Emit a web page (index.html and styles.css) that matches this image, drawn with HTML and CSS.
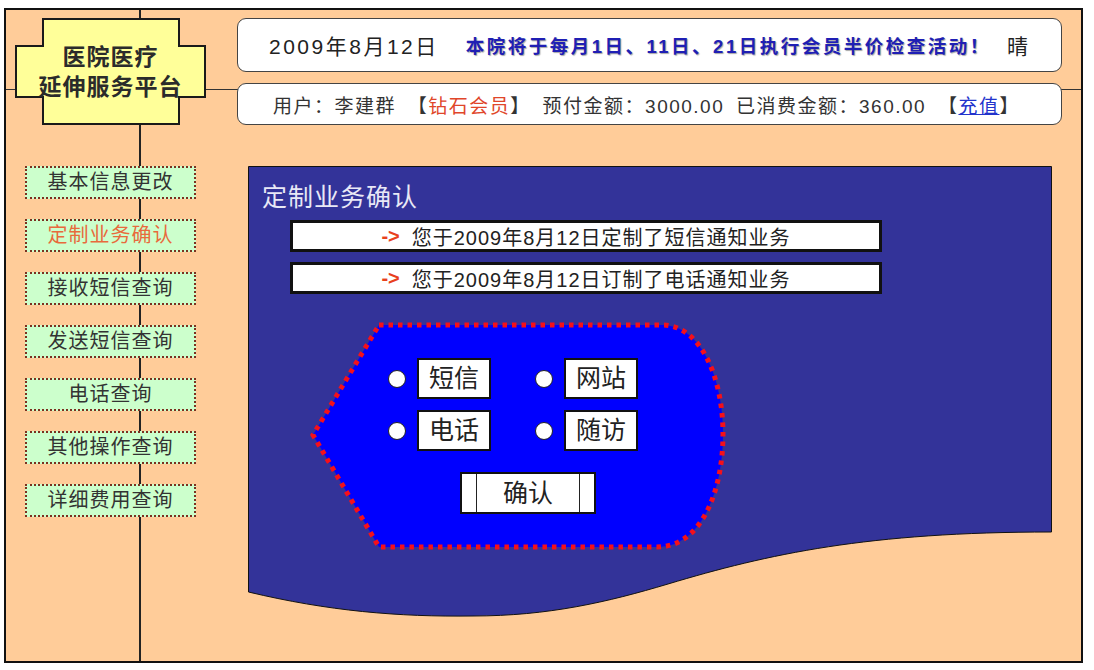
FILE: index.html
```html
<!DOCTYPE html>
<html lang="zh-CN">
<head>
  <meta charset="UTF-8" />
  <title>医院医疗延伸服务平台 - 定制业务确认</title>
  <link rel="stylesheet" href="styles.css">
</head>
<body>
  <div class="frame">
    <header class="top">
      <div class="logo">
        <svg class="logo-shape" width="191" height="107" viewBox="0 0 191 107">
          <path d="M28,1 H164 V28 H190 V79 H164 V106 H28 V79 H1 V28 H28 Z" fill="#ffff99" stroke="#1a1a1a" stroke-width="2"/>
        </svg>
        <div class="logo-text">医院医疗<br>延伸服务平台</div>
      </div>

      <div class="info">
        <div class="info-box news">
          <span class="date">2009年8月12日</span>
          <span class="news-text">本院将于每月1日、11日、21日执行会员半价检查活动！</span>
          <span class="weather">晴</span>
        </div>
        <div class="info-box user">
          <span>用户：李建群 【<span class="level">钻石会员</span>】 预付金额：3000.00 已消费金额：360.00 【<a href="#">充值</a>】</span>
        </div>
      </div>
    </header>

    <div class="main">
      <nav class="menu">
        <a href="#">基本信息更改</a>
        <a href="#" class="active">定制业务确认</a>
        <a href="#">接收短信查询</a>
        <a href="#">发送短信查询</a>
        <a href="#">电话查询</a>
        <a href="#">其他操作查询</a>
        <a href="#">详细费用查询</a>
      </nav>

      <section class="panel">
        <svg class="panel-shape" width="804" height="452" viewBox="0 0 804 452">
          <path d="M0.5,0.5 H803.5 V366 C620,366 520,388 420,418 C360,436 300,450 225,450 C150,451 80,445 0.5,426 Z" fill="#333399" stroke="#111" stroke-width="1"/>
        </svg>
        <div class="panel-body">
          <h2>定制业务确认</h2>
          <div class="notice"><span class="arrow">-&gt;</span>您于2009年8月12日定制了短信通知业务</div>
          <div class="notice"><span class="arrow">-&gt;</span>您于2009年8月12日订制了电话通知业务</div>

          <div class="chooser">
            <svg class="chooser-shape" width="418" height="228" viewBox="0 0 418 228">
              <path d="M69,3 H352 C392,3 413,58 413,112 C413,168 392,225 347,225 H69 L3,113 Z" fill="#0000ff" stroke="#f5101a" stroke-width="5" stroke-dasharray="4.5 5"/>
            </svg>
            <div class="chooser-body">
              <div class="options">
                <label class="option"><span class="radio"></span><span class="option-label">短信</span></label>
                <label class="option"><span class="radio"></span><span class="option-label">网站</span></label>
                <label class="option"><span class="radio"></span><span class="option-label">电话</span></label>
                <label class="option"><span class="radio"></span><span class="option-label">随访</span></label>
              </div>
              <button class="confirm"><span>确认</span></button>
            </div>
          </div>
        </div>
      </section>
    </div>
  </div>
</body>
</html>
```

FILE: styles.css
```css
body {
  margin: 0;
  background: #fff;
  font-family: "Liberation Sans", "Noto Sans CJK SC", sans-serif;
  color: #222;
}
.frame {
  margin: 8px 0 0 4px;
  width: 1075px;
  height: 651px;
  border: 2px solid #111;
  background:
    linear-gradient(#222, #222) 133px 0 / 2px 100% no-repeat,
    linear-gradient(#333, #333) 0 79px / 100% 1px no-repeat,
    #ffcc99;
}
.top {
  display: flex;
  padding: 8px 0 0 9px;
}
.logo {
  display: grid;
  width: 191px;
  height: 107px;
}
.logo > * {
  grid-area: 1 / 1;
}
.logo-text {
  align-self: center;
  text-align: center;
  font-size: 23px;
  font-weight: bold;
  line-height: 30px;
  color: #2b2b2b;
  letter-spacing: 1px;
}
.info {
  margin-left: 31px;
  width: 825px;
  display: flex;
  flex-direction: column;
  gap: 11px;
}
.info-box {
  display: flex;
  align-items: center;
  box-sizing: border-box;
  background: #fff;
  border: 1.5px solid #444;
  border-radius: 9px;
}
.news {
  height: 54px;
  padding: 0 33px 0 31px;
  font-size: 21px;
}
.date {
  letter-spacing: 2.5px;
}
.news-text {
  margin-left: 27px;
  color: #1f1fb4;
  font-weight: bold;
  font-size: 18.5px;
  letter-spacing: 2.5px;
  text-shadow: 1px 1px 1px rgba(0,0,0,0.35);
}
.weather {
  margin-left: auto;
}
.user {
  height: 42px;
  padding-left: 35px;
  font-size: 19px;
  color: #333;
  letter-spacing: 1.5px;
  word-spacing: 5px;
}
.level {
  color: #e0462a;
}
.user a {
  color: #2233cc;
}
.main {
  display: flex;
  align-items: flex-start;
  gap: 52px;
  margin-top: 41px;
  padding-left: 19px;
}
.menu {
  width: 171px;
  display: flex;
  flex-direction: column;
  gap: 20px;
}
.menu a {
  display: block;
  height: 33px;
  box-sizing: border-box;
  border: 2px dotted #7b3020;
  background: #ccffcc;
  text-align: center;
  line-height: 29px;
  font-size: 20px;
  color: #333;
  text-decoration: none;
  letter-spacing: 1px;
}
.menu a.active {
  color: #e86a3c;
}
.panel {
  display: grid;
  width: 804px;
  height: 452px;
}
.panel > * {
  grid-area: 1 / 1;
}
.panel-body {
  padding: 16px 0 0 14px;
}
.panel h2 {
  margin: 0;
  font-size: 25px;
  font-weight: normal;
  line-height: 30px;
  color: #e8e8f6;
  letter-spacing: 1px;
}
.notice {
  display: flex;
  align-items: center;
  justify-content: center;
  margin: 8px 0 0 28px;
  width: 592px;
  height: 32px;
  box-sizing: border-box;
  border: 3px solid #111;
  background: #fff;
  font-size: 20px;
  letter-spacing: 1px;
  color: #222;
}
.notice + .notice {
  margin-top: 10px;
}
.arrow {
  color: #e8401c;
  font-weight: bold;
  margin-right: 12px;
  letter-spacing: 0;
}
.chooser {
  display: grid;
  width: 418px;
  height: 228px;
  margin: 28px 0 0 48px;
}
.chooser > * {
  grid-area: 1 / 1;
}
.chooser-body {
  padding: 36px 0 0 78px;
}
.options {
  display: grid;
  grid-template-columns: repeat(2, max-content);
  column-gap: 44px;
  row-gap: 11px;
}
.option {
  display: flex;
  align-items: center;
  gap: 11px;
}
.radio {
  width: 18px;
  height: 18px;
  box-sizing: border-box;
  border-radius: 50%;
  border: 1.5px solid #222;
  background: #fff;
}
.option-label {
  width: 74px;
  height: 41px;
  box-sizing: border-box;
  border: 2px solid #111;
  background: #fff;
  font-size: 25px;
  line-height: 37px;
  text-align: center;
  color: #222;
}
.confirm {
  display: flex;
  margin: 21px 0 0 72px;
  width: 136px;
  height: 42px;
  padding: 0 14px;
  box-sizing: border-box;
  border: 2px solid #111;
  background: #fff;
  font-family: inherit;
  font-size: 25px;
  color: #222;
  cursor: pointer;
}
.confirm span {
  flex: 1;
  border-left: 1.5px solid #222;
  border-right: 1.5px solid #222;
  line-height: 38px;
}
```
